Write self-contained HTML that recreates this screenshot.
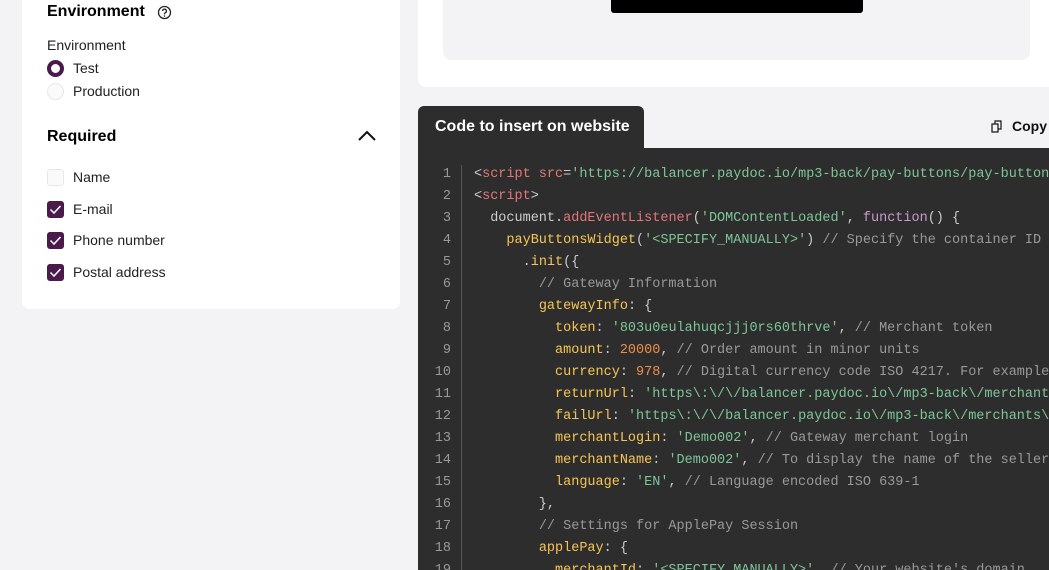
<!DOCTYPE html>
<html><head><meta charset="utf-8"><style>
*{margin:0;padding:0;box-sizing:border-box}
html,body{width:1049px;height:570px;overflow:hidden}
body{background:#f3f3f5;font-family:"Liberation Sans",sans-serif;position:relative;color:#111}
.card{position:absolute;left:22px;top:-20px;width:378px;height:329px;background:#fff;border-radius:8px}
.t{position:absolute;font-size:14px;color:#222}
.h{position:absolute;font-size:16px;font-weight:bold;color:#000}
.cb{position:absolute;left:47px;width:17px;height:17px;border-radius:3px;background:#4a1a4a}
.cb svg{position:absolute;left:2px;top:3px}
.top{position:absolute;left:418px;top:-20px;width:650px;height:107px;background:#fff;border-radius:8px}
.gray{position:absolute;left:443px;top:-10px;width:587px;height:70px;background:#f3f3f5;border-radius:8px}
.btn{position:absolute;left:611px;top:-10px;width:252px;height:23px;background:#000;border-radius:3px}
.tab{position:absolute;left:418px;top:106px;width:226px;height:44px;background:#2d2d2d;border-radius:6px 6px 0 0;color:#fff;font-weight:bold;font-size:16px;padding:12px 0 0 17px}
.code{position:absolute;left:418px;top:148px;width:640px;height:430px;background:#2d2d2d}
.sep{position:absolute;left:461px;top:165px;width:1px;height:420px;background:#555}
.ln{position:absolute;left:418px;width:33px;text-align:right;font-family:"Liberation Mono",monospace;font-size:13.5px;color:#999}
.l{position:absolute;left:474px;font-family:"Liberation Mono",monospace;font-size:13.5px;color:#ccc;white-space:pre}
.r{color:#e2777a}.g{color:#7ec699}.y{color:#f8c555}.c{color:#999}.o{color:#f08d49}.p{color:#cc99cd}
</style></head><body>
<div class="card"></div>
<div class="h" style="left:47px;top:3px">Environment</div>
<svg style="position:absolute;left:157px;top:5px" width="15" height="15" viewBox="0 0 15 15"><circle cx="7.5" cy="7.5" r="6" fill="none" stroke="#222" stroke-width="1.3"/><path d="M5.6 6a1.9 1.9 0 1 1 2.6 1.8c-.5.2-.7.5-.7 1v.6" fill="none" stroke="#222" stroke-width="1.3"/><circle cx="7.5" cy="11" r=".8" fill="#222"/></svg>
<div class="t" style="left:47px;top:37px">Environment</div>
<div style="position:absolute;left:47px;top:60px;width:17px;height:17px;border-radius:50%;border:4.5px solid #4a1a4a;background:#fff"></div>
<div class="t" style="left:73px;top:60px">Test</div>
<div style="position:absolute;left:47px;top:83px;width:17px;height:17px;border-radius:50%;border:1px solid #e8e8e8;background:#fafafa"></div>
<div class="t" style="left:73px;top:83px">Production</div>
<div class="h" style="left:47px;top:128px">Required</div>
<svg style="position:absolute;left:358px;top:130px" width="18" height="12" viewBox="0 0 18 12"><path d="M1 10L9 2l8 8" fill="none" stroke="#111" stroke-width="2"/></svg>
<div style="position:absolute;left:47px;top:169px;width:17px;height:17px;border-radius:3px;border:1px solid #e8e8e8;background:#fafafa"></div>
<div class="t" style="left:73px;top:169px">Name</div>
<div class="cb" style="top:201px"><svg width="13" height="11"><path d="M1.5 5.5l3.5 3.5 6.5-7" fill="none" stroke="#fff" stroke-width="1.5"/></svg></div>
<div class="t" style="left:73px;top:201px">E-mail</div>
<div class="cb" style="top:232px"><svg width="13" height="11"><path d="M1.5 5.5l3.5 3.5 6.5-7" fill="none" stroke="#fff" stroke-width="1.5"/></svg></div>
<div class="t" style="left:73px;top:232px">Phone number</div>
<div class="cb" style="top:264px"><svg width="13" height="11"><path d="M1.5 5.5l3.5 3.5 6.5-7" fill="none" stroke="#fff" stroke-width="1.5"/></svg></div>
<div class="t" style="left:73px;top:264px">Postal address</div>

<div class="top"></div><div class="gray"></div><div class="btn"></div>
<div class="tab">Code to insert on website</div>
<svg style="position:absolute;left:991px;top:120px" width="11" height="13" viewBox="0 0 11 13"><rect x="1" y="4" width="6" height="8" fill="none" stroke="#111" stroke-width="1.2"/><path d="M4 4V1h6v8H7" fill="none" stroke="#111" stroke-width="1.2"/></svg>
<div class="t" style="left:1012px;top:118px;font-weight:bold;color:#111">Copy</div>
<div class="code"></div><div class="sep"></div>
<div class="ln" style="top:164px;line-height:22px">1<br>2<br>3<br>4<br>5<br>6<br>7<br>8<br>9<br>10<br>11<br>12<br>13<br>14<br>15<br>16<br>17<br>18<br>19</div>
<div class="l" style="top:164px;line-height:22px">&lt;<span class="r">script</span> <span class="r">src</span>=<span class="g">'https://balancer.paydoc.io/mp3-back/pay-buttons/pay-buttons.js'</span>
&lt;<span class="r">script</span>&gt;
  document.<span class="r">addEventListener</span>(<span class="g">'DOMContentLoaded'</span>, <span class="p">function</span>() {
    <span class="y">payButtonsWidget</span>(<span class="g">'&lt;SPECIFY_MANUALLY&gt;'</span>) <span class="c">// Specify the container ID</span>
      .<span class="y">init</span>({
        <span class="c">// Gateway Information</span>
        <span class="y">gatewayInfo</span>: {
          <span class="y">token</span>: <span class="g">'803u0eulahuqcjjj0rs60thrve'</span>, <span class="c">// Merchant token</span>
          <span class="y">amount</span>: <span class="o">20000</span>, <span class="c">// Order amount in minor units</span>
          <span class="y">currency</span>: <span class="o">978</span>, <span class="c">// Digital currency code ISO 4217. For example</span>
          <span class="y">returnUrl</span>: <span class="g">'https\:\/\/balancer.paydoc.io\/mp3-back\/merchants'</span>
          <span class="y">failUrl</span>: <span class="g">'https\:\/\/balancer.paydoc.io\/mp3-back\/merchants\/'</span>
          <span class="y">merchantLogin</span>: <span class="g">'Demo002'</span>, <span class="c">// Gateway merchant login</span>
          <span class="y">merchantName</span>: <span class="g">'Demo002'</span>, <span class="c">// To display the name of the seller</span>
          <span class="y">language</span>: <span class="g">'EN'</span>, <span class="c">// Language encoded ISO 639-1</span>
        },
        <span class="c">// Settings for ApplePay Session</span>
        <span class="y">applePay</span>: {
          <span class="y">merchantId</span>: <span class="g">'&lt;SPECIFY_MANUALLY&gt;'</span>, <span class="c">// Your website's domain</span></div>
</body></html>
